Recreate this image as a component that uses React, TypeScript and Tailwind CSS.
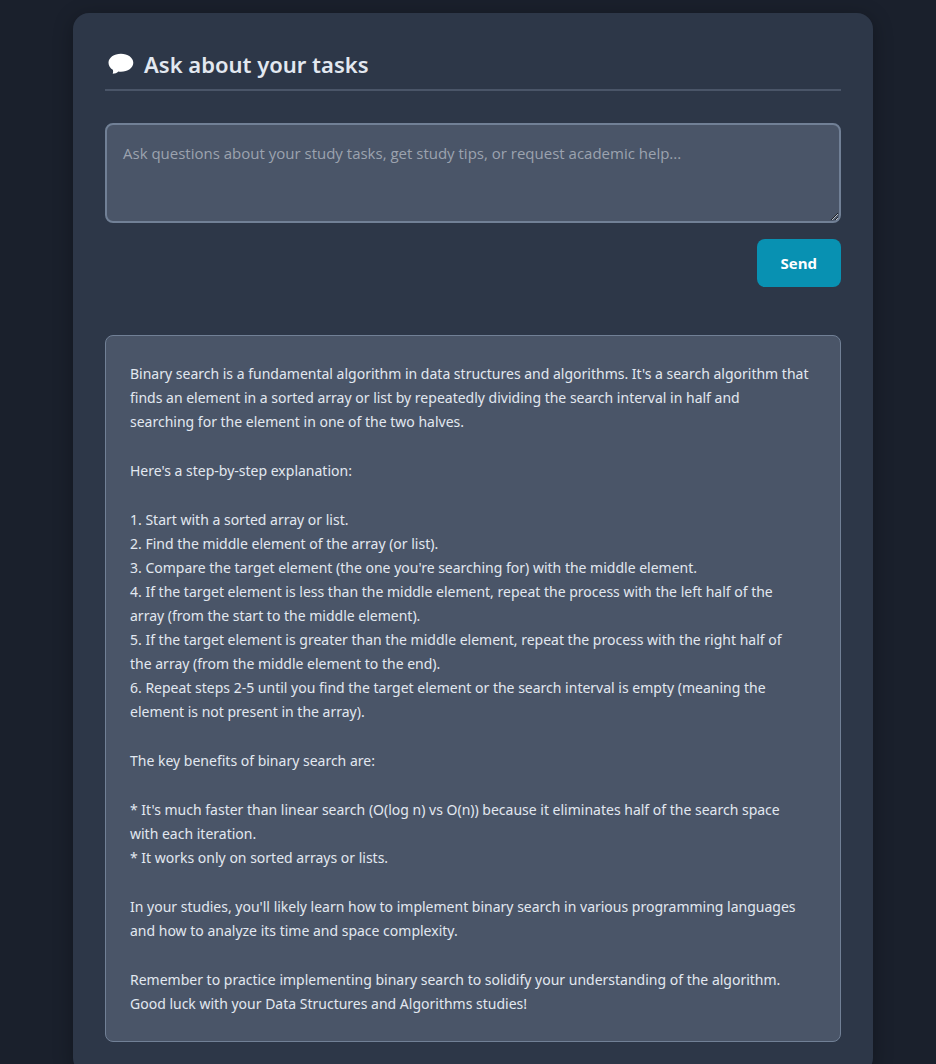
import { useState } from "react";

const steps = [
  "Start with a sorted array or list.",
  "Find the middle element of the array (or list).",
  "Compare the target element (the one you're searching for) with the middle element.",
  "If the target element is less than the middle element, repeat the process with the left half of the\narray (from the start to the middle element).",
  "If the target element is greater than the middle element, repeat the process with the right half of\nthe array (from the middle element to the end).",
  "Repeat steps 2-5 until you find the target element or the search interval is empty (meaning the\nelement is not present in the array).",
];

const benefits = [
  "It's much faster than linear search (O(log n) vs O(n)) because it eliminates half of the search space\nwith each iteration.",
  "It works only on sorted arrays or lists.",
];

function SpeechBubble() {
  return (
    <svg viewBox="0 0 26 22" className="h-[22px] w-[26px] shrink-0" aria-hidden="true">
      <path
        d="M12.900.8C6 .8.500 4.700.500 9.700c0 2.900 1.700 5.400 4.300 7.100.5 1.100.4 2.500-.1 4 2.200-.1 4.200-.9 5.700-2.300.8.100 1.600.200 2.500.200 6.900 0 12.400-4 12.400-9S19.800.8 12.900.8Z"
        fill="#ffffff"
      />
    </svg>
  );
}

function Answer() {
  return (
    <section
      aria-label="Answer"
      className="flex flex-col gap-[25px] rounded-lg border border-[#718096] bg-[#4a5568] px-6 pt-[26px] pb-[25px] font-['Noto_Sans','Open_Sans',sans-serif] text-sm leading-6 whitespace-pre-line text-[#e2e8f0]"
    >
      <p>
        {
          "Binary search is a fundamental algorithm in data structures and algorithms. It's a search algorithm that finds an element in a sorted array or list by repeatedly dividing the search interval in half and\nsearching for the element in one of the two halves."
        }
      </p>
      <p>Here's a step-by-step explanation:</p>
      <ol>
        {steps.map((step, index) => (
          <li key={step}>{`${index + 1}. ${step}`}</li>
        ))}
      </ol>
      <p>The key benefits of binary search are:</p>
      <ul>
        {benefits.map((benefit) => (
          <li key={benefit}>{`* ${benefit}`}</li>
        ))}
      </ul>
      <p>
        {
          "In your studies, you'll likely learn how to implement binary search in various programming languages and how to analyze its time and space complexity."
        }
      </p>
      <p>
        {
          "Remember to practice implementing binary search to solidify your understanding of the algorithm. Good luck with your Data Structures and Algorithms studies!"
        }
      </p>
    </section>
  );
}

export default function App() {
  const [question, setQuestion] = useState("");

  return (
    <main className="min-h-screen bg-[#1a202c] pt-[13px] pr-5 pl-[30px] font-['Open_Sans','Noto_Sans',sans-serif]">
      <div className="mx-auto max-w-[800px] rounded-2xl bg-[#2d3748] px-8 pt-8 pb-8 shadow-[0_4px_20px_rgba(0,0,0,0.3)]">
        <h2 className="flex items-center gap-2.5 border-b-2 border-[#4a5568] pt-px pb-[7px] pl-[3px] font-['Noto_Sans','Open_Sans',sans-serif] text-[22px] leading-9 font-semibold text-[#e2e8f0]">
          <SpeechBubble />
          Ask about your tasks
        </h2>
        <form
          className="mt-8 flex flex-col items-end gap-4"
          onSubmit={(event) => event.preventDefault()}
        >
          <textarea
            aria-label="Your question"
            value={question}
            onChange={(event) => setQuestion(event.target.value)}
            placeholder="Ask questions about your study tasks, get study tips, or request academic help..."
            className="block h-[100px] w-full resize-y rounded-lg border-2 border-[#718096] bg-[#4a5568] p-4 text-[15px] leading-6 text-[#e2e8f0] outline-none placeholder:text-[#9ca3af] focus:border-[#0891b2]"
          />
          <button
            type="submit"
            className="h-12 rounded-lg bg-[#0891b2] px-6 text-[15px] leading-6 font-bold text-white"
          >
            Send
          </button>
        </form>
        <div className="mt-12">
          <Answer />
        </div>
      </div>
    </main>
  );
}
